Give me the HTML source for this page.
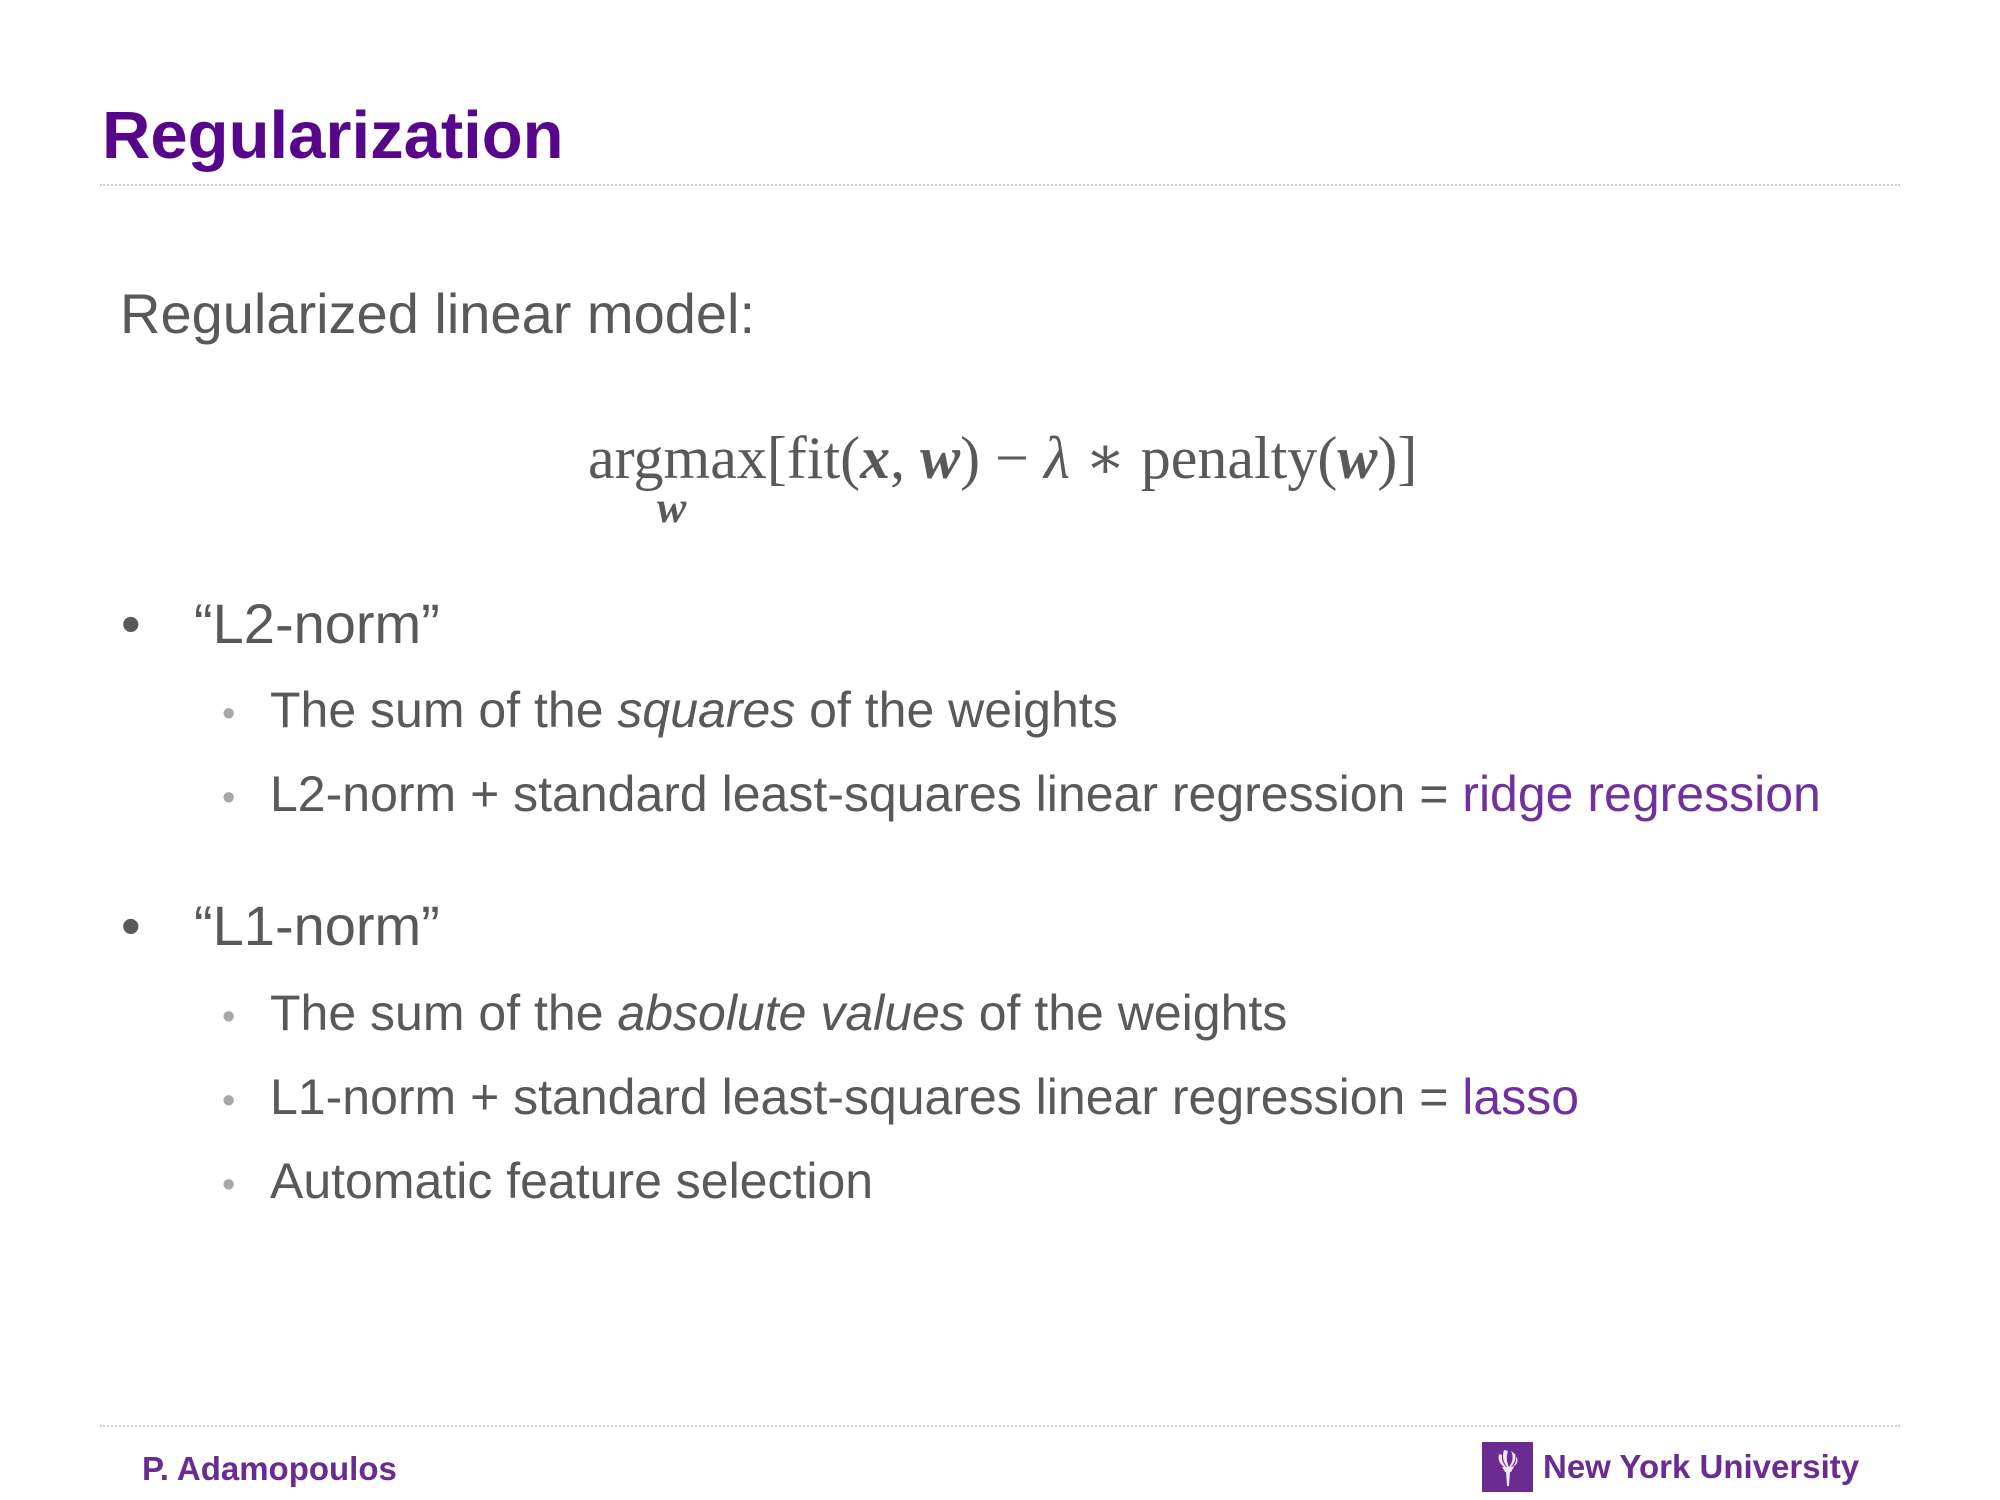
<!DOCTYPE html>
<html><head><meta charset="utf-8"><style>
html,body{margin:0;padding:0;background:#fff;}
body{width:2000px;height:1500px;position:relative;overflow:hidden;font-family:"Liberation Sans",Arial,sans-serif;color:#595959;}
.a{position:absolute;line-height:1;white-space:nowrap;}
.dot{position:absolute;left:100px;width:1800px;height:0;border-top:2px dotted #d0d0d0;}
.b1{font-size:56px;}
.s{font-size:50px;}
.sb{position:absolute;color:#a6a6a6;font-size:38px;line-height:1;}
.p{color:#7030a0;}
.m{font-family:"Liberation Serif","DejaVu Serif",serif;}
</style></head><body>
<div class="a" style="left:102px;top:102px;font-size:67px;font-weight:bold;color:#57068c;">Regularization</div>
<div class="dot" style="top:184px;"></div>
<div class="a" style="left:120px;top:286px;font-size:56px;">Regularized linear model:</div>

<div class="a m" style="left:588px;top:428px;font-size:60px;color:#595959;">argmax[fit(<b><i>x</i></b>, <b><i>w</i></b>) − <i>λ</i> ∗ penalty(<b><i>w</i></b>)]</div>
<div class="a m" style="left:657px;top:486px;font-size:44px;font-weight:bold;font-style:italic;">w</div>

<div class="a b1" style="left:121px;top:596px;">•</div>
<div class="a b1" style="left:194px;top:596px;">“L2-norm”</div>
<div class="sb" style="left:222px;top:695px;">•</div>
<div class="a s" style="left:270px;top:685px;">The sum of the <i>squares</i> of the weights</div>
<div class="sb" style="left:222px;top:779px;">•</div>
<div class="a s" style="left:270px;top:769px;">L2-norm + standard least-squares linear regression = <span class="p">ridge regression</span></div>

<div class="a b1" style="left:121px;top:898px;">•</div>
<div class="a b1" style="left:194px;top:898px;">“L1-norm”</div>
<div class="sb" style="left:222px;top:998px;">•</div>
<div class="a s" style="left:270px;top:988px;">The sum of the <i>absolute values</i> of the weights</div>
<div class="sb" style="left:222px;top:1082px;">•</div>
<div class="a s" style="left:270px;top:1072px;">L1-norm + standard least-squares linear regression = <span class="p">lasso</span></div>
<div class="sb" style="left:222px;top:1166px;">•</div>
<div class="a s" style="left:270px;top:1156px;">Automatic feature selection</div>

<div class="dot" style="top:1425px;"></div>
<div class="a" style="left:142px;top:1452px;font-size:33px;font-weight:bold;color:#6b2c91;">P. Adamopoulos</div>
<div style="position:absolute;left:1482px;top:1442px;width:51px;height:50px;background:#6b2c91;">
<svg width="51" height="50" viewBox="0 0 51 50"><g fill="#f1e4f4">
<path d="M17 12 Q15 20 22 25 L24 25 Q19 19 20 13Z"/>
<path d="M22 8 Q19 17 25 25 L27 25 Q23 17 26 9Z"/>
<path d="M29 9 Q33 17 27 25 L29 25 Q35 18 33 12Z"/>
<path d="M34 15 Q35 21 30 25 L31 25 Q37 21 35 16Z"/>
<path d="M20 25 L32 25 L29 30 L23 30Z"/>
<path d="M24 30 L28 30 L27 44 L25 44Z"/></g></svg></div>
<div class="a" style="left:1543px;top:1450px;font-size:33px;font-weight:bold;color:#6b2c91;">New York University</div>
</body></html>
